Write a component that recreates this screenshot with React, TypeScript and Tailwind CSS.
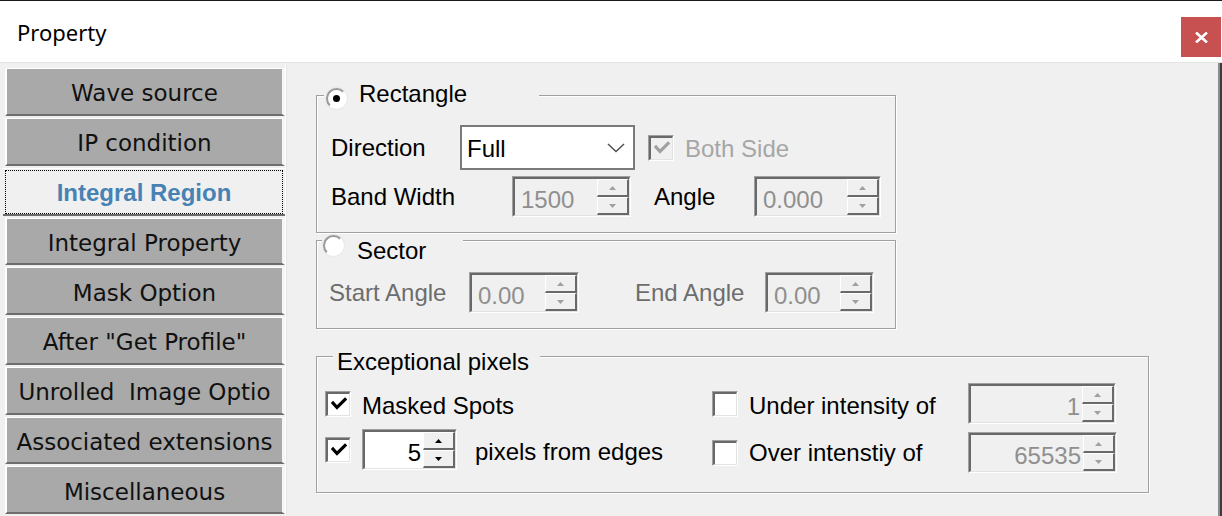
import React from "react";

const LBL = "font-['Liberation_Sans',Arial,sans-serif] text-[24px] leading-[24px]";

function Arrow({ up, enabled }: { up?: boolean; enabled?: boolean }) {
  return (
    <svg width="7" height="4" viewBox="0 0 7 4">
      {up ? (
        <polygon points="0,4 7,4 3.5,0" fill={enabled ? "#000" : "#a0a0a0"} />
      ) : (
        <polygon points="0,0 7,0 3.5,4" fill={enabled ? "#000" : "#a0a0a0"} />
      )}
    </svg>
  );
}

function SpinHalf({ up, enabled }: { up?: boolean; enabled?: boolean }) {
  return (
    <div className="flex-1 flex items-center justify-center bg-[#f0f0f0] border-t border-l border-t-white border-l-white border-b-2 border-r-2 border-b-[#696969] border-r-[#696969]">
      <Arrow up={up} enabled={enabled} />
    </div>
  );
}

function SpinBox({
  w,
  h = "h-[41px]",
  value,
  disabled,
  right,
}: {
  w: string;
  h?: string;
  value: string;
  disabled?: boolean;
  right?: boolean;
}) {
  return (
    <div className={`${w} ${h} flex border border-t-[#a0a0a0] border-l-[#a0a0a0] border-b-white border-r-white shrink-0`}>
      <div className="flex flex-1 border-t-2 border-l-2 border-t-[#696969] border-l-[#696969] border-b border-r border-b-[#e3e3e3] border-r-[#e3e3e3]">
        <div
          className={`flex-1 flex items-center pt-[6px] ${right ? "justify-end pr-[2px]" : "pl-[6px]"} ${
            disabled ? "bg-[#f0f0f0] text-[#8f8f8f]" : "bg-white text-black"
          } ${LBL}`}
        >
          {value}
        </div>
        <div className="flex flex-col w-[32px]">
          <SpinHalf up enabled={!disabled} />
          <SpinHalf enabled={!disabled} />
        </div>
      </div>
    </div>
  );
}

function CheckBox({ checked, disabled }: { checked?: boolean; disabled?: boolean }) {
  return (
    <div className="w-[26px] h-[26px] shrink-0 border border-t-[#a0a0a0] border-l-[#a0a0a0] border-b-white border-r-white">
      <div
        className={`w-full h-full border-t-2 border-l-2 border-t-[#696969] border-l-[#696969] border-b border-r border-b-[#e3e3e3] border-r-[#e3e3e3] flex items-center justify-center ${
          disabled ? "bg-[#f0f0f0]" : "bg-white"
        }`}
      >
        {checked && (
          <svg width="16" height="14" viewBox="0 0 16 14">
            <polyline
              points="2,6 6,10.5 14,2.5"
              fill="none"
              stroke={disabled ? "#a0a0a0" : "#000"}
              strokeWidth="3.2"
              strokeLinecap="square"
            />
          </svg>
        )}
      </div>
    </div>
  );
}

function Radio({ checked }: { checked?: boolean }) {
  return (
    <div className="w-[21px] h-[21px] shrink-0 rounded-full border-2 border-t-[#9a9a9a] border-l-[#9a9a9a] border-b-[#ffffff] border-r-[#ffffff] bg-white flex items-center justify-center shadow-[0_0_0_1px_#e8e8e8]">
      {checked && <div className="w-[7px] h-[7px] rounded-full bg-black" />}
    </div>
  );
}

const FRAME =
  "relative border border-[#a0a0a0] shadow-[inset_1px_1px_0_#ffffff,1px_1px_0_#ffffff]";

const navItems = [
  "Wave source",
  "IP condition",
  "Integral Region",
  "Integral Property",
  "Mask Option",
  'After "Get Profile"',
  "Unrolled  Image Optio",
  "Associated extensions",
  "Miscellaneous",
];

export default function App() {
  return (
    <div className="w-[1222px] h-[516px] overflow-hidden bg-[#f0f0f0] border-t border-t-[#1a1a1a] flex flex-col">
      {/* Title bar */}
      <div className="h-[61px] bg-white flex items-start justify-between shrink-0">
        <div className="pl-[17px] pt-[16px] font-['Noto_Sans',sans-serif] text-[22px] leading-[30px] text-black">
          Property
        </div>
        <div className="mt-[16px] mr-[1px] w-[40px] h-[40px] bg-[#c75050] flex items-center justify-center">
          <svg width="13" height="11" viewBox="0 0 13 11">
            <path d="M1 0.5 L12 10.5 M12 0.5 L1 10.5" stroke="#fff" strokeWidth="2.6" />
          </svg>
        </div>
      </div>

      {/* Content */}
      <div className="flex flex-1 border-t border-t-[#e3e3e3] min-h-0">
        {/* Left nav */}
        <div className="w-[285px] shrink-0 pt-[5px] flex flex-col">
          {navItems.map((t) =>
            t === "Integral Region" ? (
              <div
                key={t}
                className="h-[48px] mb-[2px] ml-[3px] w-[283px] bg-[#f0f0f0] border-t border-t-white border-b-2 border-b-[#6d6d6d] pt-[1px] pl-[2px] pr-[3px]"
              >
                <div className="h-[44px] pt-[3px] border border-dotted border-black flex items-center justify-center font-['Liberation_Sans',Arial,sans-serif] font-bold text-[24px] leading-[24px] text-[#4682b4]">
                  {t}
                </div>
              </div>
            ) : (
              <div
                key={t}
                className="h-[48px] mb-[2px] ml-[5px] w-[280px] pt-[4px] bg-[#a9a9a9] border-t border-t-white border-l-2 border-l-white border-r-[3px] border-r-[#f6f6f6] border-b-2 border-b-[#6d6d6d] flex items-center justify-center overflow-hidden whitespace-pre font-['DejaVu_Sans',sans-serif] text-[23px] leading-[26px] text-[#111]"
              >
                {t}
              </div>
            )
          )}
        </div>

        {/* Divider */}
        <div className="w-[2px] shrink-0 border-l border-l-white bg-[#e6e6e6]" />

        {/* Right panel */}
        <div className={`flex-1 pl-[29px] pt-[32px] text-black ${LBL}`}>
          {/* Rectangle */}
          <div className={`${FRAME} w-[580px] h-[138px] pt-[29px] pl-[14px]`}>
            <div className="absolute left-[7px] top-[-15px] w-[215px] h-[26px] bg-[#f0f0f0] flex items-start">
              <div className="mt-[7px] ml-[2px]">
                <Radio checked />
              </div>
              <span className="ml-[12px] pt-[1px]">Rectangle</span>
            </div>
            <div className="flex items-center h-[45px]">
              <span className="w-[129px] shrink-0">Direction</span>
              <div className="w-[175px] h-[45px] shrink-0 bg-white border-2 border-[#7a7a7a] flex items-center justify-between pl-[5px] pr-[8px]">
                <span className="pt-[2px]">Full</span>
                <svg width="18" height="10" viewBox="0 0 18 10">
                  <polyline points="1,1 9,8.5 17,1" fill="none" stroke="#505050" strokeWidth="1.5" />
                </svg>
              </div>
              <div className="ml-[13px]">
                <CheckBox checked disabled />
              </div>
              <span className="ml-[11px] text-[#a6a6a6] pt-[2px]">Both Side</span>
            </div>
            <div className="flex items-center h-[41px] mt-[6px]">
              <span className="w-[181px] shrink-0">Band Width</span>
              <SpinBox w="w-[119px]" value="1500" disabled />
              <span className="ml-[23px] w-[100px] shrink-0">Angle</span>
              <SpinBox w="w-[127px]" value="0.000" disabled />
            </div>
          </div>

          {/* Sector */}
          <div className={`${FRAME} w-[580px] h-[89px] mt-[7px] pt-[31px] pl-[12px]`}>
            <div className="absolute left-[5px] top-[-2px] w-[141px] h-[26px] bg-[#f0f0f0] flex items-start">
              <div className="mt-[-4px] ml-[1px]">
                <Radio />
              </div>
              <span className="ml-[13px]">Sector</span>
            </div>
            <div className="flex items-center h-[41px] text-[#6d6d6d]">
              <span className="w-[140px] shrink-0">Start Angle</span>
              <SpinBox w="w-[110px]" value="0.00" disabled />
              <span className="ml-[56px] w-[130px] shrink-0">End Angle</span>
              <SpinBox w="w-[109px]" value="0.00" disabled />
            </div>
          </div>

          {/* Exceptional pixels */}
          <div className={`${FRAME} w-[833px] h-[137px] mt-[27px] pt-[26px] pl-[8px]`}>
            <div className="absolute left-[16px] top-[-7px] w-[207px] h-[24px] bg-[#f0f0f0] pl-[4px]">
              Exceptional pixels
            </div>
            <div className="flex items-center h-[41px]">
              <div className="w-[387px] shrink-0 flex items-center">
                <CheckBox checked />
                <span className="ml-[11px] pt-[4px]">Masked Spots</span>
              </div>
              <CheckBox />
              <span className="ml-[11px] w-[219px] shrink-0 pt-[4px]">Under intensity of</span>
              <SpinBox w="w-[148px]" value="1" disabled right />
            </div>
            <div className="flex items-center h-[41px] mt-[5px]">
              <div className="w-[387px] shrink-0 flex items-center">
                <CheckBox checked />
                <div className="ml-[11px]">
                  <SpinBox w="w-[95px]" value="5" right />
                </div>
                <span className="ml-[18px] pt-[4px]">pixels from edges</span>
              </div>
              <div className="flex items-center mt-[6px]">
                <CheckBox />
                <span className="ml-[11px] w-[219px] shrink-0">Over intenstiy of</span>
                <SpinBox w="w-[149px]" value="65535" disabled right />
              </div>
            </div>
          </div>
        </div>

        {/* Right window edge */}
        <div className="w-[4px] shrink-0 border-l-2 border-l-[#8c8c8c] bg-[#3c3c3c]" />
      </div>
    </div>
  );
}
